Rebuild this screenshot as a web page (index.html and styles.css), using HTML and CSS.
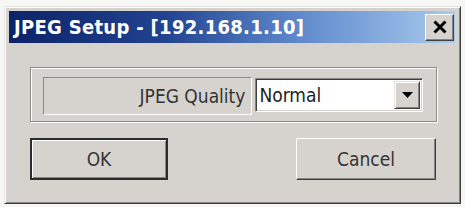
FILE: index.html
```html
<!DOCTYPE html>
<html lang="en">
<head>
    <meta charset="UTF-8">
    <title>JPEG Setup</title>
    <link rel="stylesheet" href="styles.css">
</head>
<body>
    <div class="window">
        <div class="titlebar">
            <span class="title">JPEG Setup - [192.168.1.10]</span>
            <button class="close" aria-label="Close">
                <svg width="16" height="14" viewBox="0 0 16 14">
                    <path d="M2.5 1.5 L13.5 12.5 M13.5 1.5 L2.5 12.5" stroke="#000" stroke-width="3" fill="none"/>
                </svg>
            </button>
        </div>

        <div class="content">
            <div class="group">
                <div class="label-box">JPEG Quality</div>
                <div class="combo">
                    <span class="combo-value">Normal</span>
                    <span class="combo-arrow">
                        <svg width="11" height="6" viewBox="0 0 11 6">
                            <path d="M0 0 H11 L5.5 6 Z" fill="#000"/>
                        </svg>
                    </span>
                </div>
            </div>

            <div class="buttons">
                <button class="button default">OK</button>
                <button class="button cancel">Cancel</button>
            </div>
        </div>
    </div>
</body>
</html>
```

FILE: styles.css
```css
body {
    margin: 0;
    background-color: #f6f6f4;
    font-family: "DejaVu Sans Condensed", "DejaVu Sans", sans-serif;
    font-size: 19px;
    color: #222;
}
.window {
    margin: 6px 0 0 4px;
    width: 457px;
    height: 198px;
    box-sizing: border-box;
    background-color: #d6d3ce;
    border: 1px solid;
    border-color: #e4e2de #3c3c3c #3c3c3c #e4e2de;
    box-shadow: inset 1px 1px 0 #fff, inset -1px -1px 0 #858585;
    padding: 4px 5px 0 4px;
}
.titlebar {
    height: 32px;
    display: flex;
    align-items: center;
    justify-content: space-between;
    background: linear-gradient(to right, #0c2369 0%, #224390 35%, #5f89cc 65%, #a8cbee 100%);
}
.title {
    color: #fff;
    font-weight: bold;
    font-size: 20px;
    padding-left: 5px;
    letter-spacing: 0.3px;
}
.close {
    width: 29px;
    height: 27px;
    margin-right: 1px;
    padding: 0;
    display: flex;
    align-items: center;
    justify-content: center;
    background-color: #d6d3ce;
    border: 1px solid;
    border-color: #fff #404040 #404040 #fff;
    box-shadow: inset -1px -1px 0 #858585;
}
.content {
    padding: 24px 18px 0 21px;
}
.group {
    display: flex;
    gap: 3px;
    height: 55px;
    box-sizing: border-box;
    padding: 9px 13px 0 12px;
    border: 1px solid #8c8a86;
    box-shadow: 1px 1px 0 #fff, inset 1px 1px 0 #fff;
}
.label-box {
    width: 210px;
    height: 38px;
    box-sizing: border-box;
    border: 1px solid;
    border-color: #8c8a86 #fff #fff #8c8a86;
    text-align: right;
    line-height: 36px;
    padding-right: 6px;
    color: #333;
}
.combo {
    width: 168px;
    height: 34px;
    margin-top: 1px;
    box-sizing: border-box;
    display: flex;
    align-items: stretch;
    background-color: #fff;
    border: 1px solid;
    border-color: #858585 #fff #fff #858585;
    box-shadow: inset 1px 1px 0 #404040, inset -1px -1px 0 #d6d3ce;
    padding: 2px;
}
.combo-value {
    flex: 1;
    line-height: 28px;
    padding-left: 1px;
    color: #222;
}
.combo-arrow {
    width: 26px;
    display: flex;
    align-items: center;
    justify-content: center;
    background-color: #d6d3ce;
    box-sizing: border-box;
    border: 1px solid;
    border-color: #e4e2de #404040 #404040 #e4e2de;
    box-shadow: inset 1px 1px 0 #fff, inset -1px -1px 0 #858585;
}
.buttons {
    display: flex;
    justify-content: space-between;
    margin-top: 16px;
    padding-right: 1px;
}
.button {
    height: 42px;
    box-sizing: border-box;
    font-family: inherit;
    font-size: 19px;
    color: #333;
    background-color: #d6d3ce;
    border: 1px solid;
    border-color: #fff #404040 #404040 #fff;
    box-shadow: inset -1px -1px 0 #858585;
    padding: 0;
}
.button.default {
    width: 138px;
    border: 2px solid #2c2c2c;
    box-shadow: inset 1px 1px 0 #fff, inset -1px -1px 0 #858585;
}
.button.cancel {
    width: 140px;
}
```
